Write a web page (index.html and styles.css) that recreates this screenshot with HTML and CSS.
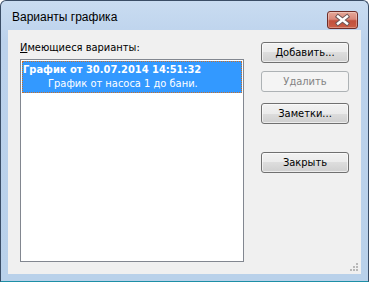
FILE: index.html
```html
<!DOCTYPE html>
<html lang="ru">
<head>
  <meta charset="UTF-8" />
  <title>Варианты графика</title>
  <link rel="stylesheet" href="styles.css">
</head>
<body>

  <div class="window">
    <div class="titlebar">
      <span class="title">Варианты графика</span>
      <div class="close-btn">
        <svg width="31" height="18" viewBox="0 0 31 18">
          <path d="M11 5.5 L20 12.5 M20 5.5 L11 12.5" stroke="#6f5656" stroke-width="4.4" stroke-linecap="square" fill="none" />
          <path d="M11 5.5 L20 12.5 M20 5.5 L11 12.5" stroke="#ffffff" stroke-width="2.4" stroke-linecap="square" fill="none" />
        </svg>
      </div>
    </div>

    <div class="client">
      <div class="list-col">
        <div class="list-label"><u>И</u>меющиеся варианты:</div>
        <div class="listbox">
          <div class="list-item selected">
            <div class="item-title">График от 30.07.2014 14:51:32</div>
            <div class="item-note">График от насоса 1 до бани.</div>
          </div>
        </div>
      </div>

      <div class="btn-col">
        <button class="btn">Добавить...</button>
        <button class="btn btn-delete" disabled>Удалить</button>
        <button class="btn btn-notes">Заметки...</button>
        <button class="btn btn-close">Закрыть</button>
      </div>

      <!-- size grip -->
      <svg class="grip" width="10" height="10" viewBox="0 0 10 10">
        <rect x="7" y="1" width="2" height="2" fill="#b8b8b8" />
        <rect x="4" y="4" width="2" height="2" fill="#b8b8b8" />
        <rect x="7" y="4" width="2" height="2" fill="#b8b8b8" />
        <rect x="1" y="7" width="2" height="2" fill="#b8b8b8" />
        <rect x="4" y="7" width="2" height="2" fill="#b8b8b8" />
        <rect x="7" y="7" width="2" height="2" fill="#b8b8b8" />
      </svg>
    </div>
  </div>

</body>
</html>
```

FILE: styles.css
```css
html, body {
  margin: 0;
  padding: 0;
  background-color: #ffffff;
}

.window {
  box-sizing: border-box;
  width: 369px;
  height: 282px;
  border: 1px solid #3a4d66;
  border-bottom-color: #1d8fa6;
  border-radius: 6px 6px 0 0;
  background: linear-gradient(to bottom, #c9dcf1 0px, #bcd2ec 40px, #b9d1ea 100%);
  padding: 0 7px 7px 7px;
  display: flex;
  flex-direction: column;
}

.titlebar {
  height: 29px;
  display: flex;
  align-items: center;
  justify-content: space-between;
  padding-left: 4px;
}

.title {
  font-family: "Liberation Sans", "Noto Sans", sans-serif;
  font-size: 12px;
  color: #000000;
  margin-top: 3px;
}

.close-btn {
  width: 31px;
  height: 18px;
  box-sizing: border-box;
  margin-right: 3px;
  margin-top: 8px;
  border: 1px solid #6e2d28;
  border-radius: 3px;
  background: linear-gradient(to bottom, #e6a898 0%, #d9887a 45%, #c2503c 55%, #cb5e46 100%);
  box-shadow: inset 0 0 0 1px rgba(255, 255, 255, 0.3);
  display: flex;
  align-items: center;
  justify-content: center;
}

.close-btn svg {
  display: block;
  margin: -1px;
}

.client {
  position: relative;
  flex: 1;
  background-color: #f0f0f0;
  display: flex;
  gap: 17px;
  padding: 11px 12px 12px 12px;
  font-family: "DejaVu Sans", "Liberation Sans", sans-serif;
  font-stretch: condensed;
  font-size: 11px;
  color: #000000;
}

.list-col {
  width: 224px;
  display: flex;
  flex-direction: column;
}

.list-label {
  line-height: 14px;
  margin-bottom: 4px;
}

.listbox {
  flex: 1;
  border: 1px solid #828790;
  background-color: #ffffff;
  padding: 1px;
}

.list-item {
  padding: 2px 0 3px 1px;
  line-height: 13px;
}

.list-item.selected {
  background-color: #3399ff;
  color: #ffffff;
  outline: 1px dotted #c86f2a;
  outline-offset: -1px;
}

.item-title {
  font-weight: bold;
}

.item-note {
  padding-left: 25px;
  margin-top: 1px;
}

.btn-col {
  width: 88px;
  display: flex;
  flex-direction: column;
  padding-top: 1px;
}

.btn {
  box-sizing: border-box;
  height: 21px;
  width: 88px;
  border: 1px solid #707070;
  border-radius: 3px;
  background: linear-gradient(to bottom, #f2f2f2 0%, #ebebeb 50%, #dddddd 50%, #cfcfcf 100%);
  box-shadow: inset 0 0 0 1px rgba(255, 255, 255, 0.6);
  font-family: inherit;
  font-stretch: condensed;
  font-size: 11px;
  color: #000000;
  padding: 0;
}

.btn:disabled {
  border-color: #adb2b5;
  background: #f4f4f4;
  color: #838383;
  box-shadow: none;
}

.btn-delete {
  margin-top: 8px;
}

.btn-notes {
  margin-top: 11px;
}

.btn-close {
  margin-top: 28px;
}

.grip {
  position: absolute;
  right: 2px;
  bottom: 2px;
}
```
